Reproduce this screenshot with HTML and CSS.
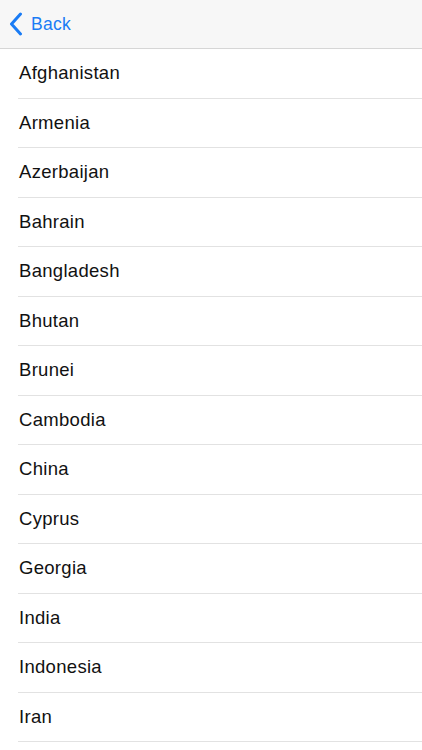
FILE: index.html
```html
<!DOCTYPE html>
<html>
<head>
<meta charset="utf-8">
<link rel="stylesheet" href="styles.css">
</head>
<body>
<header class="navbar">
  <a class="back" href="#">
    <svg class="chev" width="14" height="24" viewBox="0 0 14 24"><path d="M11.5 2 L2.5 12 L11.5 22" fill="none" stroke="#1a7cf5" stroke-width="3" stroke-linecap="round" stroke-linejoin="round"/></svg>
    <span>Back</span>
  </a>
</header>
<ul class="list">
  <li><span>Afghanistan</span></li>
  <li><span>Armenia</span></li>
  <li><span>Azerbaijan</span></li>
  <li><span>Bahrain</span></li>
  <li><span>Bangladesh</span></li>
  <li><span>Bhutan</span></li>
  <li><span>Brunei</span></li>
  <li><span>Cambodia</span></li>
  <li><span>China</span></li>
  <li><span>Cyprus</span></li>
  <li><span>Georgia</span></li>
  <li><span>India</span></li>
  <li><span>Indonesia</span></li>
  <li><span>Iran</span></li>
</ul>
</body>
</html>
```
FILE: styles.css
```css
html, body {
  margin: 0;
  padding: 0;
  background: #ffffff;
  font-family: "Liberation Sans", Arial, sans-serif;
  overflow: hidden;
}
.navbar {
  height: 48px;
  background: #f7f7f7;
  border-bottom: 1px solid #d6d6d6;
  display: flex;
  align-items: center;
  padding-left: 9px;
}
.back {
  display: flex;
  align-items: center;
  gap: 8px;
  color: #1a7cf5;
  text-decoration: none;
  font-size: 17.5px;
  letter-spacing: 0.3px;
}
.chev {
  display: block;
}
.list {
  list-style: none;
  margin: 0;
  padding: 0 0 0 18px;
}
.list li {
  height: 48.5px;
  border-bottom: 1px solid #e2e2e2;
  display: flex;
  align-items: center;
  padding-left: 1px;
  font-size: 18.5px;
  color: #111111;
  letter-spacing: 0.3px;
}
```
